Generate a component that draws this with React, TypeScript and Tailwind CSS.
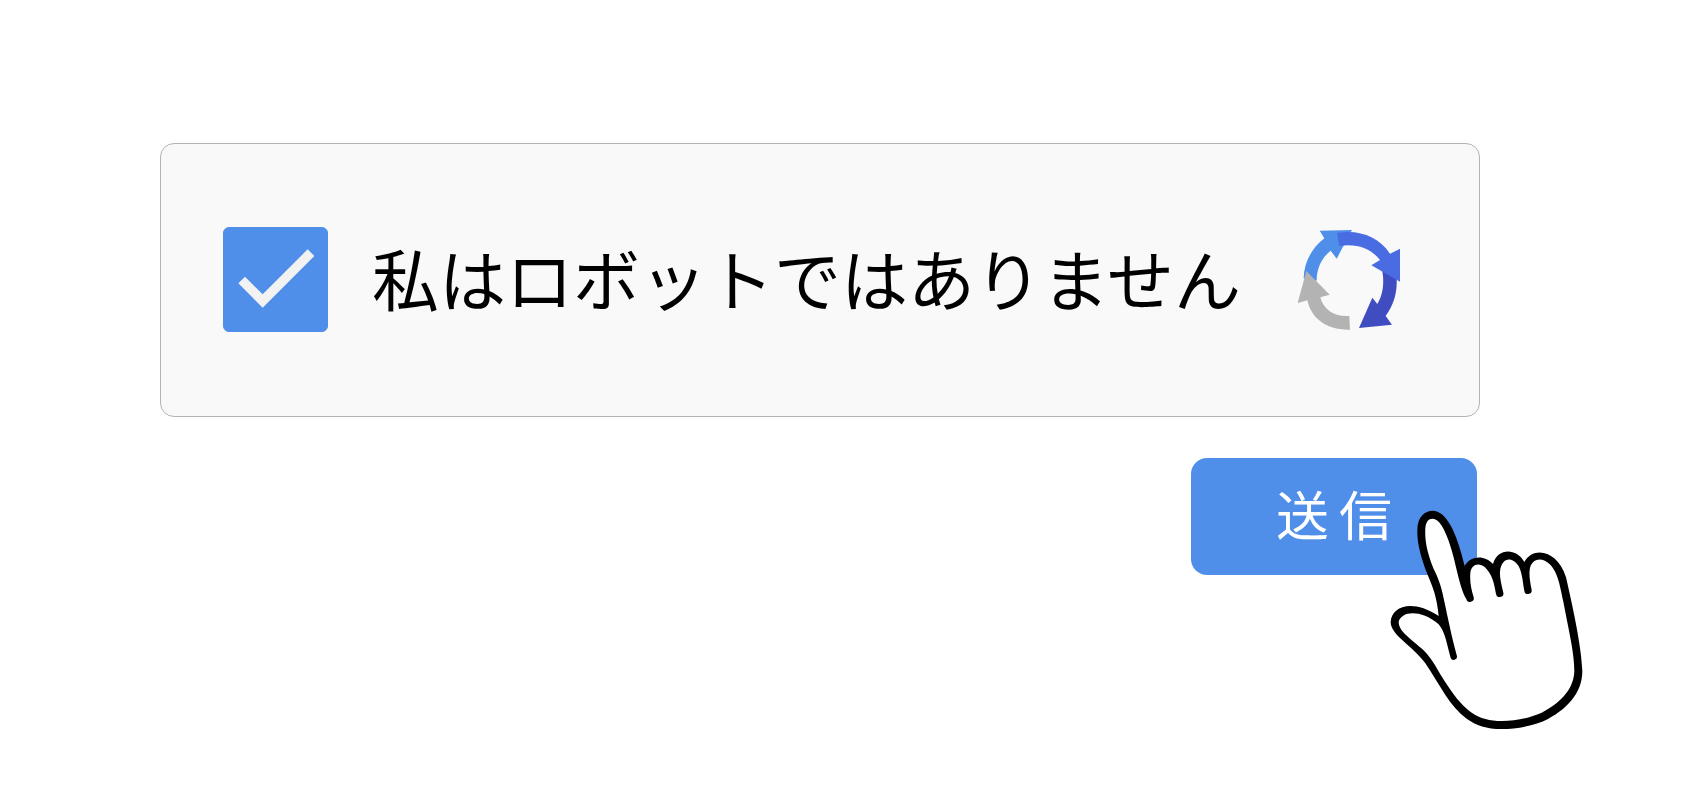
import React, { useState } from 'react';

const CheckIcon: React.FC<{ className?: string }> = ({ className }) => (
  <svg className={className} viewBox="0 0 315 315" fill="#f2f2f2" aria-hidden="true">
    <path d="M66 149L119 202L254 67L274 87L119 242L46 169Z" />
  </svg>
);

const CycleIcon: React.FC<{ className?: string }> = ({ className }) => (
  <svg className={className} viewBox="54 60 306 300" aria-hidden="true">
    <path fill="#4f8fea" d="M71 205C72 160 92 117 133 85L119 62L216 60L170 146L152 122C126 143 110 173 110 212Z" />
    <path fill="#404dc0" d="M306 180L350 205C352 248 341 286 317 318L336 344L237 354L277 263L292 282C307 258 313 225 308 190Z" />
    <path fill="#4a6ce2" d="M171 69C238 58 295 80 330 131L360 116V215L274 166L300 150C272 115 232 100 178 108Z" />
    <path fill="#b3b3b3" d="M210 359C140 361 94 326 82 271L53 279L79 183L149 254L121 262C130 299 163 321 208 318Z" />
  </svg>
);

const HandIcon: React.FC<{ className?: string }> = ({ className }) => (
  <svg className={className} viewBox="0 0 720 780" aria-hidden="true">
    <path
      fill="#000"
      d="M188 62C228 62 260 125 284 228C302 195 345 195 369 222C383 174 438 173 463 216C490 168 562 180 588 262C606 340 635 470 637 543C637 610 590 660 520 694C478 710 435 717 395 717C350 717 318 706 290 686C240 650 210 585 165 518C125 465 62 435 62 396C65 350 125 325 206 378C200 320 190 295 172 252C145 180 142 150 142 120C142 80 165 62 188 62Z"
    />
    <path
      fill="#fff"
      d="M188 86C214 86 240 145 262 248C270 280 278 310 289 327A11 11 0 0 0 311 322C303 295 299 275 301 250C303 225 325 215 345 232C368 255 372 280 378 312A11 11 0 0 0 400 308C393 280 389 260 390 245C393 205 425 195 447 230C458 255 458 275 463 302A11 11 0 0 0 485 300C480 275 477 255 479 240C483 205 515 198 541 224C562 248 568 275 580 335C598 430 613 490 613 543C612 590 580 635 515 668C475 685 435 693 395 693C360 693 330 685 305 668C268 640 250 612 225 575C205 545 190 510 160 480C125 448 86 425 86 396C92 365 150 355 206 403C225 425 230 460 242 504A10 10 0 0 0 261 499C245 440 235 390 222 330C212 280 202 260 190 235C165 170 165 140 166 115C168 95 175 86 188 86Z"
    />
  </svg>
);

const App: React.FC = () => {
  const [checked, setChecked] = useState(true);

  return (
    <main className="min-h-screen overflow-hidden bg-white pt-[143px] pl-40 pr-[220px] font-['Noto_Sans_CJK_JP','Noto_Sans',sans-serif]">
      <form onSubmit={(e) => e.preventDefault()}>
        <div className="flex items-center rounded-[14px] border border-[#b3b3b3] bg-[#f9f9f9] pt-[83px] pb-[84px] pl-[62px] pr-[79px]">
          <div className="grid h-[105px] w-[105px] shrink-0">
            <input
              id="not-robot"
              type="checkbox"
              checked={checked}
              onChange={(e) => setChecked(e.target.checked)}
              className="col-start-1 row-start-1 h-full w-full cursor-pointer appearance-none rounded-md border border-[#4f8fea] bg-white checked:bg-[#4f8fea]"
            />
            {checked && <CheckIcon className="pointer-events-none z-10 col-start-1 row-start-1 h-full w-full" />}
          </div>
          <label htmlFor="not-robot" className="ml-11 cursor-pointer whitespace-nowrap pb-1.5 text-[67px] leading-[96px] text-black">
            私はロボットではありません
          </label>
          <CycleIcon className="ml-auto h-[100px] w-[102px] shrink-0" />
        </div>

        <div className="mt-[41px] mr-[3px] flex justify-end">
          <div className="relative">
            <button
              type="submit"
              className="flex h-[117px] w-[286px] cursor-pointer items-center justify-center gap-2.5 rounded-2xl bg-[#4f8fea] pb-1.5 text-[53px] leading-none text-white"
            >
              <span>送</span>
              <span>信</span>
            </button>
            <HandIcon className="pointer-events-none absolute top-8 left-[179px] h-[260px] w-[240px]" />
          </div>
        </div>
      </form>
    </main>
  );
};

export default App;
